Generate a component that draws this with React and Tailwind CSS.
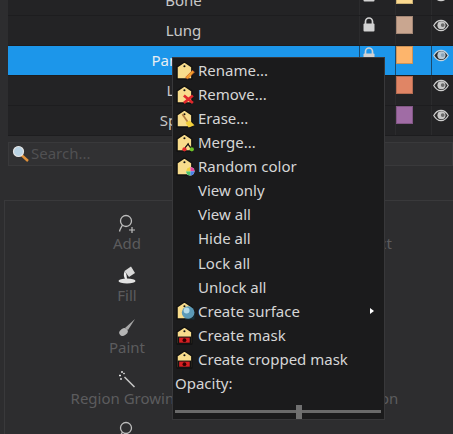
const font = { fontFamily: '"Noto Sans", sans-serif' };

function Lock() {
  return (
    <svg width="12" height="15" viewBox="0 0 12 15">
      <path d="M2.500 7V4.500a3.500 3.500 0 0 1 7 0V7" fill="none" stroke="#d2d2d2" strokeWidth="1.700" />
      <rect x="0.500" y="6.500" width="11" height="8" rx="1" fill="#d2d2d2" />
    </svg>
  );
}

function Eye({ dim }) {
  return (
    <svg width="16" height="13" viewBox="0 0 17 13">
      <path d="M0.800 6.500C3 2.600 5.600 1 8.500 1s5.500 1.600 7.700 5.500C14 10.400 11.400 12 8.500 12S3 10.400 0.800 6.500Z" fill="#2a2a2a" stroke={dim ? "#c4d4e0" : "#cfcfcf"} strokeWidth="1.300" />
      <circle cx="9" cy="6.300" r="4.300" fill={dim ? "#b9c9d5" : "#c8c8c8"} />
      <circle cx="10.300" cy="6" r="2" fill={dim ? "#8aa4b8" : "#6a6a6a"} />
    </svg>
  );
}

function Row({ name, color, selected }) {
  return (
    <div className={`flex h-[30px] shrink-0 border-t border-[#1d1d1f] ${selected ? "bg-[#1c96ea]" : "bg-[#232325]"}`}>
      <div className={`flex flex-1 items-center justify-center text-[15px] ${selected ? "text-[#e8eef2]" : "text-[#c8c8c8]"}`}>{name}</div>
      <div className={`flex w-[36px] justify-start border-l pl-[3px] pt-[1px] ${selected ? "border-[#1a4a6e]" : "border-[#2b2b2d]"}`}>
        <div><Lock /></div>
      </div>
      <div className={`w-[36px] border-l ${selected ? "border-[#1a4a6e]" : "border-[#2b2b2d]"}`}>
        <div className="h-[18px] w-[17px] border border-[#00000030]" style={{ backgroundColor: color }} />
      </div>
      <div className={`flex w-[22px] justify-start border-l pl-[1px] pt-[3px] ${selected ? "border-[#1a4a6e]" : "border-[#2b2b2d]"}`}>
        <div className="shrink-0"><Eye dim={selected} /></div>
      </div>
    </div>
  );
}

function Tag({ badge }) {
  return (
    <svg width="19" height="19" viewBox="0 0 18 18" className="shrink-0">
      <path d="M8 0.800 L15 5.500 V17 H1 V5.500 Z" fill="#f8dc8c" stroke="#111" strokeWidth="1.300" strokeLinejoin="round" />
      <circle cx="8" cy="5" r="1" fill="#111" />
      {badge === "rename" && <path d="M9 15.500 L15.500 9 L17.500 10.500 L11 17 Z" fill="#f2a02a" stroke="#c8502a" strokeWidth="0.600" />}
      {badge === "remove" && <path d="M7.500 10 L16 17 M16 10 L7.500 17" stroke="#e0282c" strokeWidth="2.600" />}
      {badge === "erase" && (
        <g>
          <path d="M6 5 L11 12" stroke="#b07a40" strokeWidth="1.600" />
          <path d="M9 13 L13 11 L17.500 15.500 L12 17.500 Z" fill="#f2cf3a" />
        </g>
      )}
      {badge === "merge" && (
        <g>
          <path d="M8.500 15 C9 11.500 12 11.500 11.500 9.500 M14 15 C14 12.500 12 12.500 11.500 10.500" fill="none" stroke="#111" strokeWidth="1.200" />
          <circle cx="8" cy="15.500" r="2" fill="#e0282c" />
          <circle cx="15" cy="15.500" r="2" fill="#6fc42a" />
        </g>
      )}
      {badge === "random" && (
        <g>
          <circle cx="13.500" cy="13.500" r="4" fill="#fff" />
          <path d="M13.500 13.500 L13.500 9.500 A4 4 0 0 1 17.500 13.500 Z" fill="#e84aa0" />
          <path d="M13.500 13.500 L17.500 13.500 A4 4 0 0 1 13.500 17.500 Z" fill="#4a80e8" />
          <path d="M13.500 13.500 L13.500 17.500 A4 4 0 0 1 9.500 13.500 Z" fill="#4ac46a" />
          <path d="M13.500 13.500 L9.500 13.500 A4 4 0 0 1 13.500 9.500 Z" fill="#f0d040" />
        </g>
      )}
      {badge === "surface" && (
        <g>
          <circle cx="11.500" cy="11" r="6" fill="#5b9ab8" />
          <circle cx="10" cy="9" r="2.800" fill="#b5dbe8" />
          <path d="M7 16 C10 17.500 15 17.500 17.500 13 V17.500 H9 Z" fill="#16303c" />
        </g>
      )}
      {badge === "mask" && (
        <g>
          <rect x="1.500" y="10" width="13" height="7" fill="#111" />
          <rect x="3" y="11" width="10" height="4.800" fill="#d81e22" />
          <ellipse cx="8" cy="13.400" rx="1.800" ry="1.800" fill="#300" />
        </g>
      )}
    </svg>
  );
}

function Item({ icon, children, arrow }) {
  return (
    <div className="relative flex h-[24.100px] items-center pl-[3px] text-[15px] text-[#d6d6d6]">
      <div className="flex w-[22px] shrink-0">{icon && <Tag badge={icon} />}</div>
      <span className="whitespace-nowrap">{children}</span>
      {arrow && <div className="absolute right-[10px] top-[9px] h-0 w-0 border-y-[3px] border-l-[4px] border-y-transparent border-l-white" />}
    </div>
  );
}

function Tool({ label, children }) {
  return (
    <div className="flex flex-col items-center text-[15px] text-[#5c5c5e]">
      <div className="flex h-[32px] items-end">{children}</div>
      <div className="h-[19.800px] whitespace-nowrap leading-[19.800px]">{label}</div>
    </div>
  );
}

const AddIcon = () => (
  <svg width="18" height="20" viewBox="0 0 18 20">
    <circle cx="8" cy="7" r="5.500" fill="none" stroke="#bdbdbd" strokeWidth="1.300" />
    <path d="M4.500 11 C3.500 13 2 15 1.500 17.500" fill="none" stroke="#bdbdbd" strokeWidth="1.300" />
    <path d="M14 13 V19 M11 16 H17" stroke="#bdbdbd" strokeWidth="1.200" />
  </svg>
);
const FillIcon = () => (
  <svg width="18" height="20" viewBox="0 0 18 20">
    <path d="M6.500 5 L13 0.500 L17 7 L11 11 Z" fill="#d8d8d8" />
    <path d="M7 5 C5 8 6 11 7 13 L9 13 L8.500 9 Z" fill="#eee" />
    <ellipse cx="9" cy="15" rx="8.500" ry="2.500" fill="#e2e2e2" />
  </svg>
);
const PaintIcon = () => (
  <svg width="18" height="20" viewBox="0 0 18 20">
    <path d="M17 1 L7 10 L10 12 Z" fill="#a8a8a8" />
    <ellipse cx="5.500" cy="14" rx="4.500" ry="3.500" fill="#b5b5b5" transform="rotate(-35 5.500 14)" />
  </svg>
);
const WandIcon = () => (
  <svg width="18" height="18" viewBox="0 0 18 18" className="mb-[1px]">
    <path d="M6.500 7 L16.500 17" stroke="#c8c8c8" strokeWidth="1.500" />
    <path d="M4 1 V3 M1 5.500 H3 M6.500 3 L5.500 4" stroke="#e8e8e8" strokeWidth="1.400" />
    <circle cx="3" cy="9" r="0.900" fill="#e8e8e8" />
  </svg>
);

export default function App() {
  return (
    <div className="relative h-[434px] w-[453px] overflow-hidden bg-[#2d2d2f]" style={font}>
      <div className="-mt-[15px] ml-[8px] flex flex-col border-b border-[#1d1d1f]">
        <Row name="Bone" color="#fbd98f" />
        <Row name="Lung" color="#c9a690" />
        <Row name="Pancreas" color="#fdb56c" selected />
        <Row name="Liver" color="#e08565" />
        <Row name="Spleen" color="#a06ca5" />
      </div>

      <div className="ml-[8px] mt-[6px] flex h-[24px] items-center border border-[#39393b] bg-[#313133] pb-[2px] pl-[3px] text-[15px] text-[#505052]">
        <svg width="18" height="18" viewBox="0 0 18 18" className="mt-[2px] shrink-0">
          <path d="M9.500 10 L16 16" stroke="#e0913a" strokeWidth="2.400" />
          <circle cx="6.500" cy="6.500" r="5" fill="#b9d3e4" stroke="#e4e4e4" strokeWidth="1.200" />
        </svg>
        <span className="ml-[1px]">Search...</span>
      </div>

      <div className="ml-[4px] mt-[34px] grid w-[490px] grid-cols-2 border border-[#39393b] pt-[1px]">
        <div className="flex flex-col items-center">
          <Tool label="Add"><AddIcon /></Tool>
          <Tool label="Fill"><FillIcon /></Tool>
          <Tool label="Paint"><PaintIcon /></Tool>
          <Tool label="Region Growing"><WandIcon /></Tool>
          <Tool label=""><AddIcon /></Tool>
        </div>
        <div className="flex flex-col items-center">
          <Tool label="Select" />
          <Tool label="" />
          <Tool label="" />
          <Tool label="Dilation" />
        </div>
      </div>

      <div className="absolute left-[172px] top-[57px] h-[363px] w-[213px] border border-[#38383a] bg-[#1b1b1c]">
        <Item icon="rename">Rename...</Item>
        <Item icon="remove">Remove...</Item>
        <Item icon="erase">Erase...</Item>
        <Item icon="merge">Merge...</Item>
        <Item icon="random">Random color</Item>
        <Item>View only</Item>
        <Item>View all</Item>
        <Item>Hide all</Item>
        <Item>Lock all</Item>
        <Item>Unlock all</Item>
        <Item icon="surface" arrow>Create surface</Item>
        <Item icon="mask">Create mask</Item>
        <Item icon="mask">Create cropped mask</Item>
        <div className="flex h-[24px] items-center pl-[2px] text-[15px] text-[#d6d6d6]">Opacity:</div>
        <div className="relative mx-[2px] mt-[10px] h-[14px]">
          <div className="absolute left-0 right-[1px] top-[5px] h-[3px] bg-[#6a6a6a]" />
          <div className="absolute left-[121px] top-0 h-[14px] w-[6px] bg-[#707070]" />
        </div>
      </div>
    </div>
  );
}
